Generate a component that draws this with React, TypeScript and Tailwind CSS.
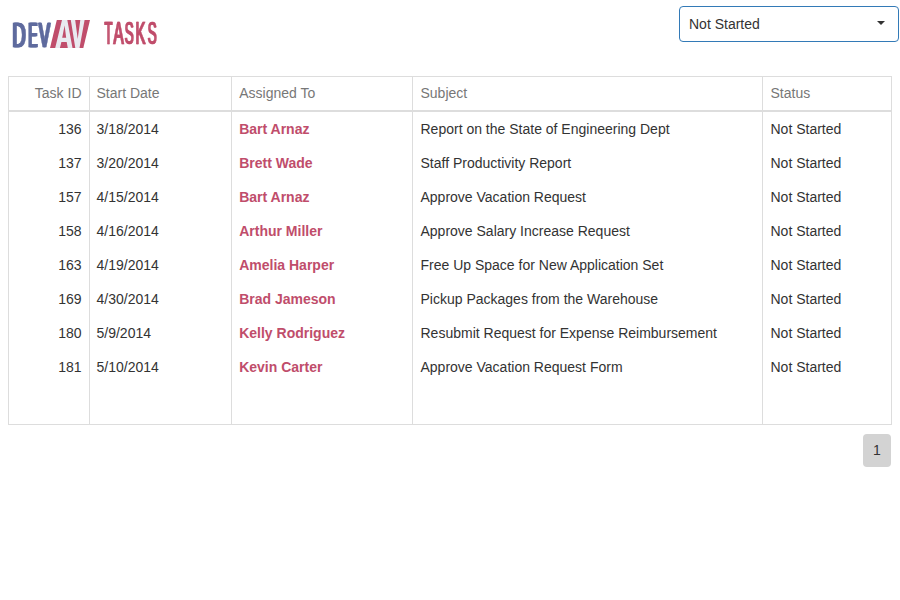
import React from 'react';

type Task = { id: number; date: string; who: string; subject: string };

const tasks: Task[] = [
  { id: 136, date: '3/18/2014', who: 'Bart Arnaz', subject: 'Report on the State of Engineering Dept' },
  { id: 137, date: '3/20/2014', who: 'Brett Wade', subject: 'Staff Productivity Report' },
  { id: 157, date: '4/15/2014', who: 'Bart Arnaz', subject: 'Approve Vacation Request' },
  { id: 158, date: '4/16/2014', who: 'Arthur Miller', subject: 'Approve Salary Increase Request' },
  { id: 163, date: '4/19/2014', who: 'Amelia Harper', subject: 'Free Up Space for New Application Set' },
  { id: 169, date: '4/30/2014', who: 'Brad Jameson', subject: 'Pickup Packages from the Warehouse' },
  { id: 180, date: '5/9/2014', who: 'Kelly Rodriguez', subject: 'Resubmit Request for Expense Reimbursement' },
  { id: 181, date: '5/10/2014', who: 'Kevin Carter', subject: 'Approve Vacation Request Form' },
];

// Each letter carries its own x position and horizontal scale.
function Letters({ items, baseline, size, className }: {
  items: [string, number, number][]; baseline: number; size: number; className: string;
}) {
  return (
    <g className={className} fill="currentColor" stroke="currentColor" strokeWidth="0.7" fontSize={size}>
      {items.map(([ch, x, scale], i) => (
        <text key={i} transform={`translate(${x} ${baseline}) scale(${scale} 1)`}>{ch}</text>
      ))}
    </g>
  );
}

function Logo() {
  return (
    <svg width="170" height="60" viewBox="0 0 170 60" className="block font-['Liberation_Sans',Arial,sans-serif]">
      <Letters
        items={[['D', 11.5, 0.52], ['E', 27.6, 0.38], ['V', 38, 0.47]]}
        baseline={47.4} size={35}
        className="text-[#5f6b9e] [filter:drop-shadow(1px_0_0_#5f6b9e)_drop-shadow(1px_0_0_#5f6b9e)]"
      />
      <path d="M56.8 20H90L83.3 48H50Z" fill="#c04d6b" />
      <path d="M62 20h5.3l5.2 28h-4.7l-1.1-6h-5.3l-1.5 6h-4.7zM70.8 20h4.4l2.5 19 2.6-19h4.3l-5.1 28h-4.2z" fill="#e9eaf0" />
      <path d="M64.6 25.5l-2.4 12.3h4z" fill="#c04d6b" />
      <Letters
        items={[['T', 103.9, 0.42], ['A', 113, 0.49], ['S', 124.3, 0.43], ['K', 134.9, 0.48], ['S', 147.3, 0.43]]}
        baseline={43.6} size={31}
        className="text-[#c04d6b] [filter:drop-shadow(1px_0_0_#c04d6b)]"
      />
    </svg>
  );
}

const rule = 'border-r border-[#dddddd]';
const idCell = `${rule} pr-[7.5px] text-right`;
const dateCell = `${rule} pl-[6.5px]`;
const whoCell = `${rule} pl-[7.2px]`;
const subjectCell = `${rule} pl-[7.5px]`;
const statusCell = 'pl-[7.5px]';
const columns = 'grid grid-cols-[81px_142px_181px_350px_128px]';

export default function App() {
  return (
    <div className="h-[600px] w-[900px] overflow-hidden bg-white font-['Liberation_Sans',Arial,sans-serif] text-sm text-[#333333]">
      <header className="flex h-[76px] items-start justify-between pr-px">
        <Logo />
        <div className="mt-1.5 flex h-9 w-[220px] items-center justify-between rounded border border-[#337ab7] pl-[9px] pr-[13px]">
          <span>Not Started</span>
          <svg width="8" height="4" viewBox="0 0 8 4" className="mb-0.5"><path d="M0 0h8L4 4z" fill="#333" /></svg>
        </div>
      </header>
      <main className="ml-2 w-[884px]">
        <section className="border border-[#dddddd]">
          <div className={`${columns} h-[35px] border-b-2 border-[#dddddd] leading-[33px] text-[#777777]`}>
            <div className={idCell}>Task ID</div>
            <div className={dateCell}>Start Date</div>
            <div className={whoCell}>Assigned To</div>
            <div className={subjectCell}>Subject</div>
            <div className={statusCell}>Status</div>
          </div>
          {tasks.map((t) => (
            <div key={t.id} className={`${columns} h-[34px] leading-[34px]`}>
              <div className={idCell}>{t.id}</div>
              <div className={dateCell}>{t.date}</div>
              <div className={`${whoCell} font-bold text-[#c04d6b]`}>{t.who}</div>
              <div className={subjectCell}>{t.subject}</div>
              <div className={statusCell}>Not Started</div>
            </div>
          ))}
          <div className={`${columns} h-10`}>
            <div className={rule} /><div className={rule} /><div className={rule} /><div className={rule} /><div />
          </div>
        </section>
        <nav className="flex justify-end pr-px pt-[9px]">
          <button className="h-[33px] w-7 rounded-sm bg-[#d3d3d3] pb-0.5">1</button>
        </nav>
      </main>
    </div>
  );
}
